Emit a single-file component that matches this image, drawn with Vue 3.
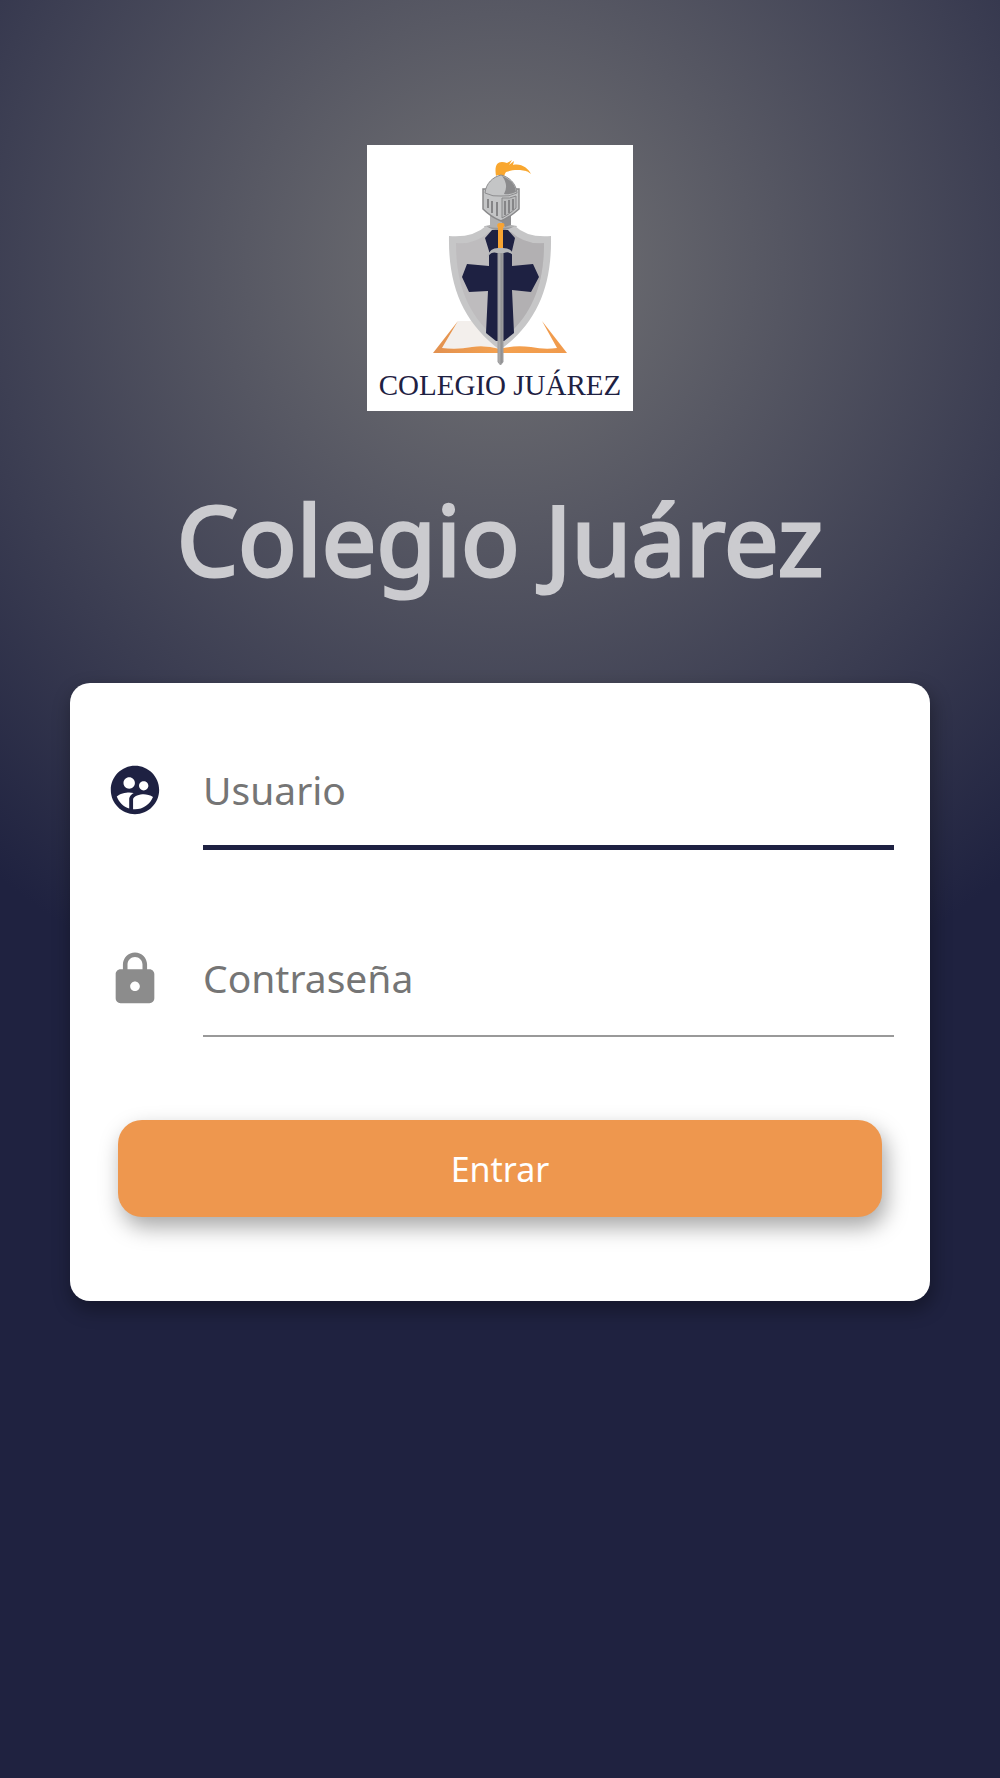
<script setup>
import { ref } from 'vue'

const user = ref('')
const password = ref('')
</script>

<template>
  <main class="screen">
    <svg class="logo" viewBox="0 0 266 266" role="img" aria-label="Colegio Juárez">
      <defs>
        <linearGradient id="bookEdge" x1="0" x2="1" y1="0" y2="0">
          <stop offset="0" stop-color="#e29150" />
          <stop offset="0.5" stop-color="#f4a14f" />
          <stop offset="1" stop-color="#f09a4c" />
        </linearGradient>
        <linearGradient id="blade" x1="0" x2="1" y1="0" y2="0">
          <stop offset="0" stop-color="#a8a8a9" />
          <stop offset="0.45" stop-color="#a8a8a9" />
          <stop offset="0.55" stop-color="#8e8e90" />
          <stop offset="1" stop-color="#98989a" />
        </linearGradient>
        <clipPath id="rightHalf"><rect x="133" y="80" width="70" height="150" /></clipPath>
      </defs>
      <rect width="266" height="266" fill="#fff" />
      <path d="M91 176 H110 L133 204 Q118 200 105 202 Q90 205 75 203Z" fill="#f3efec" />
      <path d="M91 176 L66 208 H200 L175 176 L190 203 Q178 205 164 202 Q146 200 133 204 Q118 200 105 202 Q90 205 75 203Z" fill="url(#bookEdge)" />
      <path d="M123 66 H144 V80 L150 81 L133 89 L118 81 L123 80Z" fill="#b0b0b1" />
      <path d="M134 76 L144 70 V80 L138 82Z" fill="#8d8d8f" />
      <path d="M117 81 Q133 85 150 81 L144 87 L133 91 L122 87Z" fill="#98989a" />
      <path d="M82 91 Q106 93 119 81 Q133 90 148 81 Q160 93 184 91 C185 142 170 178 133 205 C97 178 81 142 82 91Z" fill="#c6c6c7" />
      <path d="M89 98 Q108 100 122 87 H144 Q158 100 177 98 C177 142 164 172 133 197 C102 172 89 142 89 98Z" fill="#bebcbe" />
      <path d="M89 98 Q108 100 122 87 H144 Q158 100 177 98 C177 142 164 172 133 197 C102 172 89 142 89 98Z" fill="#b2b0b2" clip-path="url(#rightHalf)" />
      <path d="M118 93 L125 85 H141 L148 93 L145 106 V121 L166 119 L172 132 L164 147 L145 145 L147 188 L137 196 H129 L119 188 L121 146 L102 147 L95 132 L100 119 L122 121 V106Z" fill="#1e2142" />
      <path d="M131 108 H136 V217 L133.500 220 L131 217Z" fill="url(#blade)" stroke="#9d9d9f" />
      <path d="M120 113 Q122 103 131 103 H136 Q145 103 146 110 Q142 106 137 108 H130 Q124 106 120 113Z" fill="#b5b6b8" />
      <path d="M131 103 V83 Q129 79 132 78 H136 Q139 79 136 83 V103Z" fill="#f7a332" />
      <path d="M129 31 C127 19 131 15 140 18 L145 15 L142 20 L147 16 L146 20 C154 18 161 23 164 29 C158 24 156 26 162 27 C153 24 145 25 139 27 Q136 31 138 34 Q132 28 129 31Z" fill="#f9a72f" />
      <path d="M116 44 H152 V64 Q143 72 134 76 Q124 72 116 64Z" fill="#c4c5c6" stroke="#89898b" stroke-width="1.500" />
      <path d="M118 48 C119 38 126 32 134 30 C142 32 149 38 150 48 Q142 52 134 51 Q126 52 118 48Z" fill="#c4c5c6" stroke="#8d8d8f" />
      <path d="M135 31 Q148 36 149 47 Q143 50 137 49 Q142 40 135 31Z" fill="#8b8b8d" />
      <path d="M135 53 Q143 54 149 51 V63 Q143 69 135 73Z" fill="#b9babb" stroke="#89898b" />
      <path d="M121 54 V63 M125 56 V68 M130 57 V71 M138 56 V70 M142 55 V68 M146 54 V65" fill="none" stroke="#858587" stroke-width="2" />
      <text x="133" y="250" text-anchor="middle" class="logo-text">COLEGIO JUÁREZ</text>
    </svg>

    <h1>Colegio Juárez</h1>

    <form class="card" @submit.prevent>
      <div class="field active">
        <label for="user">
          <svg viewBox="0 0 24 24" role="img" aria-label="Usuario">
            <path fill="currentColor" d="M11.990 2c-5.520 0-10 4.480-10 10s4.480 10 10 10 10-4.480 10-10-4.480-10-10-10zm3.610 6.340c1.070 0 1.930.86 1.930 1.930 0 1.070-.86 1.930-1.930 1.930-1.070 0-1.930-.86-1.930-1.930-.01-1.070.86-1.930 1.930-1.930zm-6-1.580c1.300 0 2.360 1.060 2.360 2.360 0 1.300-1.060 2.360-2.360 2.360s-2.360-1.060-2.360-2.360c0-1.310 1.050-2.360 2.360-2.360zm0 9.130v3.750c-2.400-.75-4.300-2.600-5.140-4.960 1.050-1.120 3.670-1.690 5.140-1.690.53 0 1.200.08 1.900.22-1.640.87-1.900 2.020-1.900 2.680zM11.990 20c-.27 0-.53-.01-.79-.04v-4.070c0-1.420 2.940-2.130 4.400-2.130 1.070 0 2.920.39 3.840 1.150-1.170 2.970-4.060 5.090-7.450 5.090z" />
          </svg>
        </label>
        <input id="user" v-model="user" type="text" placeholder="Usuario" autocomplete="username" />
      </div>
      <div class="field">
        <label for="password">
          <svg viewBox="0 0 24 24" role="img" aria-label="Contraseña">
            <path fill="currentColor" d="M18 8h-1V6c0-2.760-2.240-5-5-5S7 3.240 7 6v2H6c-1.100 0-2 .9-2 2v10c0 1.100.9 2 2 2h12c1.100 0 2-.9 2-2V10c0-1.100-.9-2-2-2zm-6 9c-1.100 0-2-.9-2-2s.9-2 2-2 2 .9 2 2-.9 2-2 2zm3.100-9H8.900V6c0-1.710 1.390-3.100 3.100-3.100 1.710 0 3.100 1.390 3.100 3.100v2z" />
          </svg>
        </label>
        <input id="password" v-model="password" type="password" placeholder="Contraseña" autocomplete="current-password" />
      </div>
      <button type="submit">Entrar</button>
    </form>
  </main>
</template>

<style>
body {
  margin: 0;
}
</style>

<style scoped>
.screen {
  box-sizing: border-box;
  min-height: 100vh;
  padding: 145px 70px 80px;
  display: flex;
  flex-direction: column;
  align-items: center;
  background: radial-gradient(circle 790px at 50% 267px, #737375, #1f2240);
  font-family: "Noto Sans", sans-serif;
}

.logo {
  width: 266px;
  height: 266px;
}

.logo-text {
  font-family: "Liberation Serif", serif;
  font-size: 29px;
  fill: #1e2142;
}

h1 {
  margin: 59px 0 77px;
  font-size: 97px;
  line-height: 136px;
  font-weight: 400;
  color: #cbcbcf;
  -webkit-text-stroke: 3px #cbcbcf;
}

.card {
  box-sizing: border-box;
  width: 100%;
  padding: 51px 36px 84px;
  display: flex;
  flex-direction: column;
  background: #fff;
  border-radius: 20px;
  box-shadow: 2px 8px 18px 2px rgba(0, 0, 0, 0.3);
}

.field {
  display: flex;
  align-items: flex-start;
  margin-bottom: 73px;
  color: #8c8c8c;
}

.field label {
  width: 97px;
  height: 112px;
  display: flex;
  align-items: center;
}

.field svg {
  width: 58px;
  height: 58px;
}

.field input {
  box-sizing: border-box;
  flex: 1;
  min-width: 0;
  height: 114px;
  padding: 0 0 3px;
  border: 0;
  border-bottom: 2px solid #999;
  outline: 0;
  background: none;
  font: 39px "Noto Sans", sans-serif;
  color: #333;
}

.field input::placeholder {
  color: #757575;
  opacity: 1;
}

.field.active {
  color: #1e2142;
}

.field.active input {
  height: 116px;
  padding-bottom: 1px;
  border-bottom: 5px solid #1e2142;
}

button {
  height: 97px;
  margin: 10px 12px 0;
  border: 0;
  border-radius: 24px;
  background: #ee974e;
  box-shadow: 4px 10px 22px rgba(0, 0, 0, 0.35);
  font: 34px "Noto Sans", sans-serif;
  color: #fff;
}
</style>
